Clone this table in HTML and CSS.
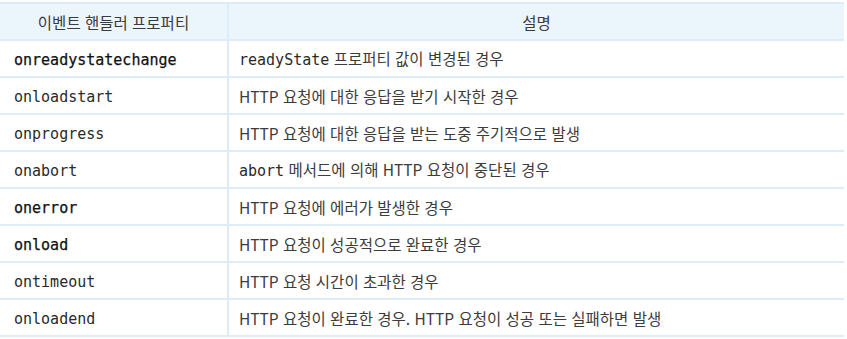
FILE: index.html
```html
<!DOCTYPE html>
<html lang="ko">
<head>
<meta charset="utf-8">
<link rel="stylesheet" href="styles.css">
</head>
<body>
<table class="events">
  <thead>
    <tr><th class="c1">이벤트 핸들러 프로퍼티</th><th class="c2">설명</th></tr>
  </thead>
  <tbody>
    <tr><td class="c1"><code class="strong">onreadystatechange</code></td><td class="c2"><code>readyState</code> 프로퍼티 값이 변경된 경우</td></tr>
    <tr><td class="c1"><code>onloadstart</code></td><td class="c2">HTTP 요청에 대한 응답을 받기 시작한 경우</td></tr>
    <tr><td class="c1"><code>onprogress</code></td><td class="c2">HTTP 요청에 대한 응답을 받는 도중 주기적으로 발생</td></tr>
    <tr><td class="c1"><code>onabort</code></td><td class="c2"><code>abort</code> 메서드에 의해 HTTP 요청이 중단된 경우</td></tr>
    <tr><td class="c1"><code class="strong">onerror</code></td><td class="c2">HTTP 요청에 에러가 발생한 경우</td></tr>
    <tr><td class="c1"><code class="strong">onload</code></td><td class="c2">HTTP 요청이 성공적으로 완료한 경우</td></tr>
    <tr><td class="c1"><code>ontimeout</code></td><td class="c2">HTTP 요청 시간이 초과한 경우</td></tr>
    <tr><td class="c1"><code>onloadend</code></td><td class="c2">HTTP 요청이 완료한 경우. HTTP 요청이 성공 또는 실패하면 발생</td></tr>
  </tbody>
</table>
</body>
</html>
```
FILE: styles.css
```css
html, body {
  margin: 0;
  padding: 0;
  background: #ffffff;
}
body {
  padding-top: 2px;
  font-family: "Noto Sans CJK KR", "Noto Sans", sans-serif;
  font-size: 15.5px;
  color: #3c3c3c;
}
.events {
  width: 844px;
  border-collapse: collapse;
  table-layout: fixed;
}
.events tr {
  height: 37px;
}
.events th,
.events td {
  box-sizing: border-box;
  border-top: 2px solid #dcedf9;
  border-bottom: 2px solid #dcedf9;
  padding: 0 10px;
  line-height: 20px;
  height: 37px;
  vertical-align: middle;
  text-align: left;
  white-space: nowrap;
  font-weight: normal;
}
.events th {
  background: #ebf5fc;
  text-align: center;
  color: #3a3a3a;
}
.events .c1 {
  width: 228px;
  padding-left: 14px;
  border-right: 2px solid #dcedf9;
}
.events th.c1 {
  padding-left: 10px;
}
code {
  font-family: "DejaVu Sans Mono", "Liberation Mono", monospace;
  font-size: 15px;
  color: #2a2a2a;
}
code.strong {
  color: #111111;
  -webkit-text-stroke: 0.25px #111111;
}
```
